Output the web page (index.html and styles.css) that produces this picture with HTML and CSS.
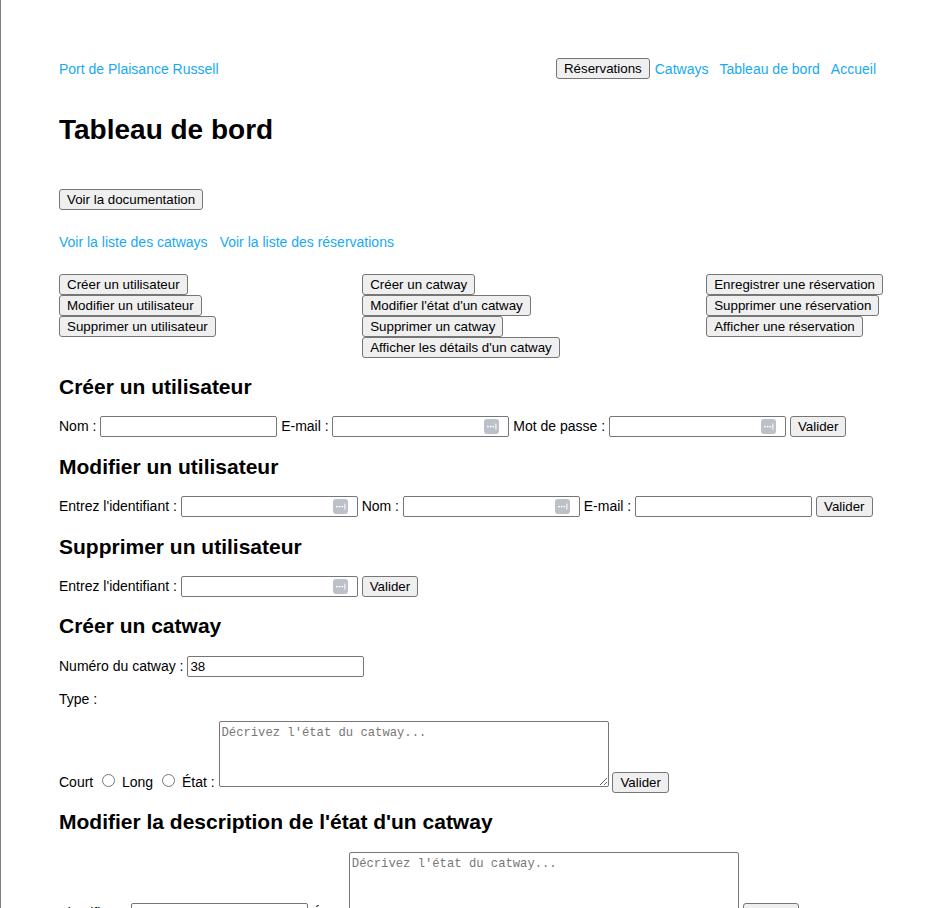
FILE: index.html
```html
<!DOCTYPE html>
<html lang="fr">
<head>
<meta charset="utf-8">
<title>Tableau de bord - Port de Plaisance Russell</title>
<link rel="stylesheet" href="styles.css">
</head>
<body>
<div class="page">
  <header class="topbar">
    <a class="brand" href="#">Port de Plaisance Russell</a>
    <nav class="nav">
      <button class="btn" type="button">Réservations</button>
      <a href="#">Catways</a>
      <a href="#">Tableau de bord</a>
      <a href="#">Accueil</a>
    </nav>
  </header>

  <h1>Tableau de bord</h1>

  <div class="doc"><button class="btn" type="button">Voir la documentation</button></div>

  <div class="lists">
    <a href="#">Voir la liste des catways</a>
    <a href="#">Voir la liste des réservations</a>
  </div>

  <div class="actions">
    <div class="col">
      <button class="btn" type="button">Créer un utilisateur</button>
      <button class="btn" type="button">Modifier un utilisateur</button>
      <button class="btn" type="button">Supprimer un utilisateur</button>
    </div>
    <div class="col">
      <button class="btn" type="button">Créer un catway</button>
      <button class="btn" type="button">Modifier l'état d'un catway</button>
      <button class="btn" type="button">Supprimer un catway</button>
      <button class="btn" type="button">Afficher les détails d'un catway</button>
    </div>
    <div class="col">
      <button class="btn" type="button">Enregistrer une réservation</button>
      <button class="btn" type="button">Supprimer une réservation</button>
      <button class="btn" type="button">Afficher une réservation</button>
    </div>
  </div>

  <section>
    <h2>Créer un utilisateur</h2>
    <form class="line">
      <label>Nom :</label> <input class="inp" type="text"> <label>E-mail :</label> <span class="field"><input class="inp" type="email"><svg class="pm" viewBox="0 0 15 15" width="15" height="15"><rect width="15" height="15" rx="3" fill="#bcc0c9"/><circle cx="3.9" cy="7.6" r="0.95" fill="#fff"/><circle cx="6.6" cy="7.6" r="0.95" fill="#fff"/><circle cx="9.3" cy="7.6" r="0.95" fill="#fff"/><rect x="11.4" y="4.6" width="1" height="6" fill="#fff"/></svg></span> <label>Mot de passe :</label> <span class="field"><input class="inp" type="password"><svg class="pm" viewBox="0 0 15 15" width="15" height="15"><rect width="15" height="15" rx="3" fill="#bcc0c9"/><circle cx="3.9" cy="7.6" r="0.95" fill="#fff"/><circle cx="6.6" cy="7.6" r="0.95" fill="#fff"/><circle cx="9.3" cy="7.6" r="0.95" fill="#fff"/><rect x="11.4" y="4.6" width="1" height="6" fill="#fff"/></svg></span> <button class="btn" type="button">Valider</button>
    </form>
  </section>

  <section>
    <h2>Modifier un utilisateur</h2>
    <form class="line">
      <label>Entrez l'identifiant :</label> <span class="field"><input class="inp" type="text"><svg class="pm" viewBox="0 0 15 15" width="15" height="15"><rect width="15" height="15" rx="3" fill="#bcc0c9"/><circle cx="3.9" cy="7.6" r="0.95" fill="#fff"/><circle cx="6.6" cy="7.6" r="0.95" fill="#fff"/><circle cx="9.3" cy="7.6" r="0.95" fill="#fff"/><rect x="11.4" y="4.6" width="1" height="6" fill="#fff"/></svg></span> <label>Nom :</label> <span class="field"><input class="inp" type="text"><svg class="pm" viewBox="0 0 15 15" width="15" height="15"><rect width="15" height="15" rx="3" fill="#bcc0c9"/><circle cx="3.9" cy="7.6" r="0.95" fill="#fff"/><circle cx="6.6" cy="7.6" r="0.95" fill="#fff"/><circle cx="9.3" cy="7.6" r="0.95" fill="#fff"/><rect x="11.4" y="4.6" width="1" height="6" fill="#fff"/></svg></span> <label>E-mail :</label> <input class="inp" type="email"> <button class="btn" type="button">Valider</button>
    </form>
  </section>

  <section>
    <h2>Supprimer un utilisateur</h2>
    <form class="line">
      <label>Entrez l'identifiant :</label> <span class="field"><input class="inp" type="text"><svg class="pm" viewBox="0 0 15 15" width="15" height="15"><rect width="15" height="15" rx="3" fill="#bcc0c9"/><circle cx="3.9" cy="7.6" r="0.95" fill="#fff"/><circle cx="6.6" cy="7.6" r="0.95" fill="#fff"/><circle cx="9.3" cy="7.6" r="0.95" fill="#fff"/><rect x="11.4" y="4.6" width="1" height="6" fill="#fff"/></svg></span> <button class="btn" type="button">Valider</button>
    </form>
  </section>

  <section>
    <h2>Créer un catway</h2>
    <form>
      <div class="line"><label>Numéro du catway :</label> <input class="inp" type="text" value="38"></div>
      <p class="type">Type :</p>
      <div class="line"><label>Court <input type="radio" name="type" value="court"></label> <label>Long <input type="radio" name="type" value="long"></label> <label>État :</label> <textarea placeholder="Décrivez l'état du catway..."></textarea> <button class="btn" type="button">Valider</button></div>
    </form>
  </section>

  <section>
    <h2>Modifier la description de l'état d'un catway</h2>
    <form class="line">
      <label>Identifiant :</label> <input class="inp" type="text"> <label>État :</label> <textarea placeholder="Décrivez l'état du catway..."></textarea> <button class="btn" type="button">Valider</button>
    </form>
  </section>

  <section>
    <h2>Supprimer un catway</h2>
    <form class="line">
      <label>Identifiant :</label> <input class="inp" type="text"> <button class="btn" type="button">Valider</button>
    </form>
  </section>

  <section>
    <h2>Afficher les détails d'un catway</h2>
    <form class="line">
      <label>Identifiant :</label> <input class="inp" type="text"> <button class="btn" type="button">Valider</button>
    </form>
  </section>

  <section>
    <h2>Enregistrer une réservation</h2>
    <form class="line">
      <label>Numéro du catway :</label> <input class="inp" type="text"> <label>Nom du client :</label> <input class="inp" type="text"> <label>Nom du bateau :</label> <input class="inp" type="text"> <button class="btn" type="button">Valider</button>
    </form>
  </section>

  <section>
    <h2>Supprimer une réservation</h2>
    <form class="line">
      <label>Identifiant :</label> <input class="inp" type="text"> <button class="btn" type="button">Valider</button>
    </form>
  </section>

  <section>
    <h2>Afficher une réservation</h2>
    <form class="line">
      <label>Identifiant :</label> <input class="inp" type="text"> <button class="btn" type="button">Valider</button>
    </form>
  </section>
</div>
</body>
</html>
```

FILE: styles.css
```css
html {
  border-left: 1px solid #7f7f7f;
  scrollbar-width: none;
  background: #fff;
}

body {
  margin: 8px;
  font-family: "Liberation Sans", Arial, sans-serif;
  font-size: 14px;
  color: #000;
}

.page {
  padding: 50px 50px 40px;
}

a {
  color: #18a9f2;
  text-decoration: none;
}

button,
input,
textarea {
  font-family: "Liberation Sans", Arial, sans-serif;
  font-size: 13.333px;
  color: #000;
}

.btn {
  height: 21px;
  margin: 0;
  padding: 0 7px;
  border: 1px solid #767676;
  border-radius: 3px;
  background: #efefef;
  white-space: nowrap;
}

.topbar {
  display: flex;
  justify-content: space-between;
  align-items: center;
  height: 21px;
}

.nav {
  display: flex;
  align-items: center;
  gap: 4px;
}

.nav .btn {
  margin-right: 1px;
}

.nav a {
  margin-right: 7px;
}

h1 {
  font-size: 28px;
  margin: 34.5px 0 43px;
}

.doc {
  display: flex;
}

.lists {
  display: flex;
  gap: 12px;
  margin: 24px 0;
}

.actions {
  display: flex;
  justify-content: space-between;
  align-items: flex-start;
}

.col {
  display: flex;
  flex-direction: column;
  align-items: flex-start;
}

h2 {
  font-size: 21px;
  margin: 17.43px 0;
}

form {
  margin: 0;
}

.inp {
  box-sizing: border-box;
  width: 177px;
  height: 21px;
  margin: 0;
  padding: 1px 2px;
  border: 1px solid #767676;
  border-radius: 2px;
  background: #fff;
}

.field {
  position: relative;
  display: inline-block;
}

.pm {
  position: absolute;
  right: 10px;
  top: 3px;
}

.type {
  margin: 14px 0;
}

textarea {
  box-sizing: border-box;
  width: 390px;
  height: 66px;
  margin: 0;
  padding: 4px 2px 2px;
  border: 1px solid #767676;
  border-radius: 2px;
  font-family: "Liberation Mono", "DejaVu Sans Mono", monospace;
  font-size: 12.2px;
}

textarea::placeholder {
  color: #777777;
}
```
